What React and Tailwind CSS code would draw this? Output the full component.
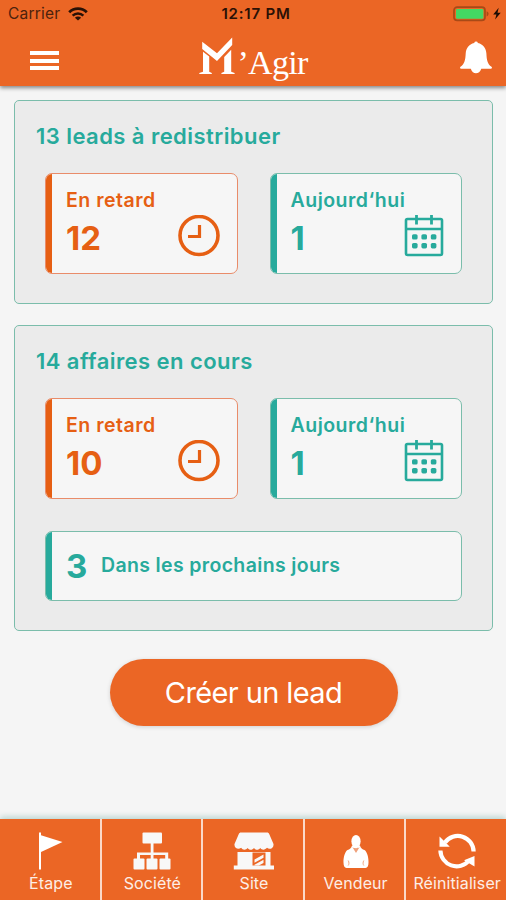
import clsx from "clsx";

const ClockIcon = () => (
  <svg className="h-[42px] w-[42px]" viewBox="0 0 42 42" fill="none" stroke="currentColor">
    <circle cx="21" cy="20.5" r="19" strokeWidth="3.6" />
    <path d="M21.5 10v11.5H10" strokeWidth="3.2" />
  </svg>
);

const CalendarIcon = () => (
  <svg className="h-[42px] w-[40px]" viewBox="0 0 40 42" fill="none" stroke="currentColor">
    <rect x="2" y="4" width="36" height="36" rx="1.5" strokeWidth="2.6" />
    <path d="M2 14h36" strokeWidth="2.4" />
    <path d="M12.5 0v9.5M27.5 0v9.5" strokeWidth="2.8" />
    <g fill="currentColor" stroke="none">
      <rect x="8" y="19.2" width="5.6" height="5.4" rx="1.6" />
      <rect x="17.4" y="19.2" width="5.6" height="5.4" rx="1.6" />
      <rect x="26.8" y="19.2" width="5.6" height="5.4" rx="1.6" />
      <rect x="8" y="28" width="5.6" height="5.4" rx="1.6" />
      <rect x="17.4" y="28" width="5.6" height="5.4" rx="1.6" />
      <rect x="26.8" y="28" width="5.6" height="5.4" rx="1.6" />
    </g>
  </svg>
);

const WifiIcon = () => (
  <svg className="h-[14px] w-[20px]" viewBox="0 0 20 14" fill="none" stroke="currentColor">
    <path d="M1.2 5.2a12.6 12.6 0 0 1 17.6 0" strokeWidth="2.8" />
    <path d="M4.6 8.7a7.8 7.8 0 0 1 10.8 0" strokeWidth="2.4" />
    <path d="M10 13.6 6.9 10.7a4.4 4.4 0 0 1 6.2 0z" fill="currentColor" stroke="none" />
  </svg>
);

const BatteryIcon = () => (
  <svg className="h-[16px] w-[48px]" viewBox="0 0 48 16">
    <rect x="1" y="1.2" width="31" height="13.2" rx="3.2" fill="none" stroke="#a84a17" strokeWidth="1.7" />
    <rect x="3" y="3" width="27.4" height="9.8" rx="1.4" fill="#43d863" />
    <path d="M33.6 5.3c2.6.9 2.6 4.2 0 5.1z" fill="#a84a17" />
    <path d="M45.7 1.8 40.2 8.5h3.2l-1.3 5.1 5.6-6.8h-3.2z" fill="#1d0c04" />
  </svg>
);

const BellIcon = () => (
  <svg className="h-[34px] w-[34px]" viewBox="0 0 34 34" fill="#fff">
    <path d="M15.2 3a1.9 1.9 0 0 1 3.7 0c5.3 1.3 8.2 5.2 8.5 10.5.3 6.500 1 10.500 5.100 13.300.8.600.5 2-.6 2H22.300c-1 3.300-3.100 4.500-5.300 4.500s-4.300-1.200-5.200-4.500H2.100c-1.100 0-1.400-1.400-.6-2 4.100-2.800 4.900-6.800 5.200-13.300C7 8.200 9.900 4.300 15.200 3z" />
  </svg>
);

const Logo = () => (
  <div className="flex items-end text-white">
    {/* the crowned M mark */}
    <svg className="h-[38px] w-[36px]" viewBox="0 0 36 38" fill="#fff">
      <path d="M3.2 4.8 18 16.2 33.2.5V8L18 24 3.2 12z" />
      <path d="M4 14.8 10.2 19.500V34.800L12.800 36V37H.3V36L4 34.800z" />
      <path d="M25.200 20 32.200 12.700V34.800L35.600 36V37H22.400V36L25.200 34.800z" />
    </svg>
    <span className="-mb-[8px] ml-[2px] font-['Liberation_Serif',serif] text-[34px] leading-[40px] tracking-[-0.7px]">
      ’Agir
    </span>
  </div>
);

const FlagIcon = () => (
  <svg className="h-[38px] w-[40px]" viewBox="0 0 40 38" fill="#fff">
    <path d="M8 .5h2v2.700L31.500 10 10 20v17.500H8z" />
  </svg>
);

const SitemapIcon = () => (
  <svg className="h-[38px] w-[38px]" viewBox="0 0 38 38" fill="#f8f8f8">
    <rect x="9.500" y=".5" width="19.500" height="11" rx="1" />
    <path d="M17.700 11h2.800v9.500h14.700V27h-3v-4H20.500v4h-2.800v-4H7v4H4v-6.500h13.700z" />
    <rect x=".5" y="26.500" width="11" height="11" rx="1" />
    <rect x="13.500" y="26.500" width="11" height="11" rx="1" />
    <rect x="26.500" y="26.500" width="11" height="11" rx="1" />
  </svg>
);

const StoreIcon = () => (
  <svg className="h-[38px] w-[42px]" viewBox="0 0 42 38" fill="#f8f8f8">
    <path d="M8 .5h26c1.200 0 1.700.5 2.200 1.500L40.500 12c.5 4-3.800 6.300-6.500 3.800-2 2.400-5.100 2.400-6.700.2-1.700 2.400-4.900 2.400-6.300 0-1.700 2.400-4.800 2.400-6.400 0-1.800 2.400-4.900 2.200-6.500-.2C5.300 18.300.9 16 1.500 12L5.800 2C6.300 1 6.900.5 8 .5z" />
    <path d="M4.500 20h33v13.500H41v4H.8v-4h3.700z" />
    <rect x="19.500" y="20.500" width="13" height="13" fill="#eb6625" />
    <path d="m21.500 27.500 9-5v3.200l-9 5zM21.500 33.500v-.8l9-5v3.200l-4.700 2.600z" />
  </svg>
);

const SellerIcon = () => (
  <svg className="h-[38px] w-[30px]" viewBox="0 0 30 38" fill="#fff">
    <ellipse cx="15" cy="9.300" rx="4.600" ry="6.300" />
    <path d="M11 13.500h8c.5 3 2.500 3.600 4.500 4.600 2.600 1.700 4.200 7.600 4 12.400 0 3-1 5.500-3 5.500H5.500c-2 0-3-2.500-3-5.500-.2-4.800 1.400-10.700 4-12.400 2-1 4-1.600 4.500-4.600z" />
    <path d="m11.300 15 3.700 6 3.700-6c-1.300 1.600-6.100 1.600-7.400 0z" fill="#efa07a" />
    <path d="M7.200 28.500c1 2 1 3.500 0 5M22.800 28.500c-1 2-1 3.500 0 5" fill="none" stroke="#f2a982" strokeWidth="1" />
  </svg>
);

const ResetIcon = () => (
  <svg className="h-[38px] w-[38px]" viewBox="0 0 38 38">
    <path d="M7 10.500A15.800 15.800 0 0 1 35.600 19.500M2.400 18.500A16.200 16.200 0 0 0 31 28.500" fill="none" stroke="#fff" strokeWidth="4.200" />
    <path d="M1.500 4.500v10.300h10.300zM36.500 34.500V24L26 28.300z" fill="#fff" />
  </svg>
);

const CounterCard = ({ label, count, late }) => {
  return (
    <div
      className={clsx(
        "relative h-[101px] overflow-hidden rounded-[7px] border bg-[#f6f6f6] pt-[14px] pl-[20px]",
        late ? "border-[#e98c6a] text-[#e65f13]" : "border-[#7bbdab] text-[#27aa9c]"
      )}
    >
      <div className="absolute inset-y-[-1px] left-[-1px] w-[7px] bg-current" />
      <p className="text-[19.500px] leading-6 font-semibold tracking-[0.5px] whitespace-nowrap">{label}</p>
      <div className="flex justify-between pr-[17px]">
        <p className="mt-[8px] text-[33px] leading-9 font-bold">{count}</p>
        <div className="mt-[3px]">{late ? <ClockIcon /> : <CalendarIcon />}</div>
      </div>
    </div>
  );
};

const Panel = ({ title, late, today, children }) => {
  return (
    <section className="rounded-[5px] border border-[#7bbdab] bg-[#ebebeb] px-[30px] pt-[21px] pb-[29px]">
      <h2 className="-ml-[9px] text-[22px] leading-7 font-semibold tracking-[0.45px] text-[#27aa9c]">{title}</h2>
      <div className="mt-[23px] grid grid-cols-2 gap-[32px]">
        <CounterCard label="En retard" count={late} late />
        <CounterCard label="Aujourd‘hui" count={today} />
      </div>
      {children}
    </section>
  );
};

const tabs = [
  { label: "Étape", icon: <FlagIcon /> },
  { label: "Société", icon: <SitemapIcon /> },
  { label: "Site", icon: <StoreIcon /> },
  { label: "Vendeur", icon: <SellerIcon /> },
  { label: "Réinitialiser", icon: <ResetIcon /> },
];

const App = () => {
  return (
    <div className="flex h-[900px] w-[506px] flex-col overflow-hidden bg-[#f5f5f5] font-['Inter',sans-serif]">
      {/* HEADER */}
      <header className="h-[86px] shrink-0 bg-[#eb6625] shadow-[0_2px_4px_rgba(0,0,0,0.45)]">
        <div className="grid h-[28px] grid-cols-3 items-center pr-[5px] pl-[8px] text-[#2a1106]">
          <div className="flex items-center gap-[8px]">
            <span className="text-[15.500px] tracking-[0.2px] text-[#4d220d]">Carrier</span>
            <WifiIcon />
          </div>
          <span className="pl-[3px] text-center text-[15px] font-semibold tracking-[0.8px] whitespace-nowrap">
            12:17 PM
          </span>
          <div className="flex justify-end">
            <BatteryIcon />
          </div>
        </div>
        <div className="flex h-[58px] items-start justify-between pr-[13px] pl-[30px]">
          <div className="mt-[23px] flex w-[29px] flex-col gap-[3.500px]">
            <div className="h-[4px] bg-white" />
            <div className="h-[4px] bg-white" />
            <div className="h-[4px] bg-white" />
          </div>
          <div className="mt-[9px] mr-[11px]">
            <Logo />
          </div>
          <div className="mt-[12px]">
            <BellIcon />
          </div>
        </div>
      </header>

      {/* PANELS */}
      <main className="flex flex-1 flex-col gap-[21px] pt-[14px] pr-[13px] pl-[14px]">
        <Panel title="13 leads à redistribuer" late={12} today={1} />
        <Panel title="14 affaires en cours" late={10} today={1}>
          <div className="relative mt-[32px] flex h-[70px] items-center overflow-hidden rounded-[7px] border border-[#7bbdab] bg-[#f6f6f6] pl-[20px] text-[#27aa9c]">
            <div className="absolute inset-y-[-1px] left-[-1px] w-[7px] bg-current" />
            <span className="w-[35px] text-[33px] leading-9 font-bold">3</span>
            <span className="text-[19.500px] font-semibold tracking-[0.35px]">Dans les prochains jours</span>
          </div>
        </Panel>
        <button className="mt-[7px] h-[67px] w-[288px] self-center rounded-full bg-[#eb6625] text-[29px] tracking-[-0.6px] text-white shadow-[0_1px_4px_rgba(0,0,0,0.15)]">
          Créer un lead
        </button>
      </main>

      {/* BOTTOM TABS */}
      <nav className="grid h-[81px] shrink-0 grid-cols-5 gap-[2px] bg-[#fbd9c8] shadow-[0_-2px_6px_rgba(90,160,150,0.4)]">
        {tabs.map((tab) => (
          <div key={tab.label} className="flex min-w-0 flex-col items-center bg-[#eb6625] pt-[13px] pl-[2px]">
            {tab.icon}
            <span className="mt-[3px] text-[16px] leading-5 tracking-[0.1px] whitespace-nowrap text-[#fdeee6]">
              {tab.label}
            </span>
          </div>
        ))}
      </nav>
    </div>
  );
};

export default App;
